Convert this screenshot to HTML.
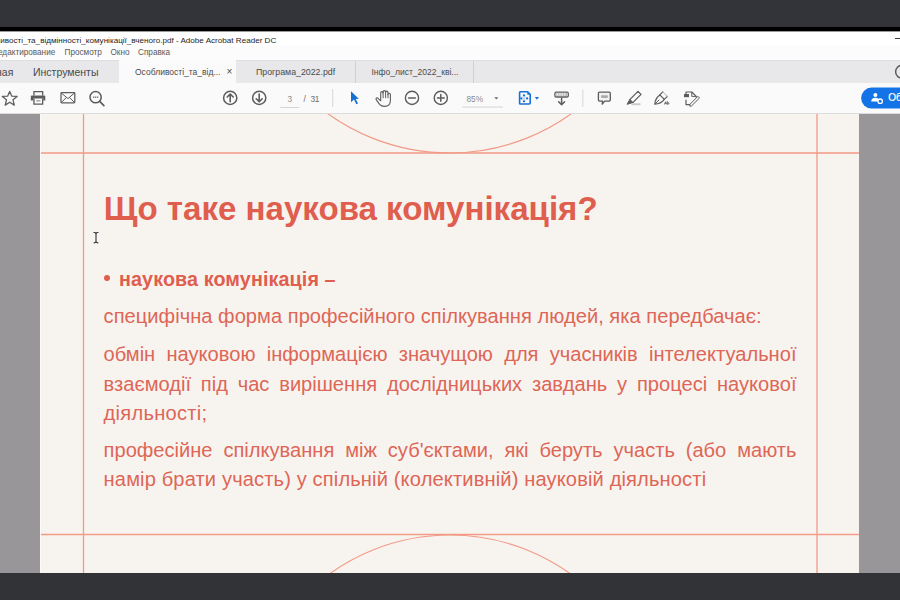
<!DOCTYPE html>
<html><head><meta charset="utf-8">
<style>
*{margin:0;padding:0;box-sizing:border-box}
html,body{width:900px;height:600px;overflow:hidden;background:#323338;font-family:"Liberation Sans",sans-serif}
.abs{position:absolute}
#topdark{left:0;top:0;width:900px;height:27px;background:#333439}
#blk{left:0;top:27px;width:900px;height:4px;background:#000}
#title{left:0;top:31px;width:900px;height:29px;background:#fff}
#tabs{left:0;top:60px;width:900px;height:23px;background:#e8e8ea;border-top:1px solid #dedee0}
#tb{left:0;top:83px;width:900px;height:31px;background:#fafafb;border-bottom:1px solid #dcdcdc}
#view{left:0;top:114px;width:900px;height:459px;background:#989698;overflow:hidden}
#page{left:40px;top:0;width:819px;height:459px;background:#f7f4f0;overflow:hidden;border-left:1px solid #fbfaf7}
#bot{left:0;top:573px;width:900px;height:27px;background:#323337}
.u{position:absolute;white-space:nowrap;line-height:1}
.t{position:absolute;white-space:nowrap;color:#de6656;line-height:1;font-size:20.1px}
.j{text-align:justify;text-align-last:justify;width:692.9px}
</style></head><body>
<div id="topdark" class="abs"></div>
<div id="blk" class="abs"></div>
<div id="title" class="abs"></div>
<div class="abs" style="left:0;top:46px;width:900px;height:14px;background:#fcfcfc"></div>
<div class="abs" style="left:0;top:31px;width:900px;height:1px;background:#9a9a9a"></div>
<div class="u" style="left:-4.5px;top:36.6px;font-size:8.1px;color:#262626">ливості_та_відмінності_комунікації_вченого.pdf - Adobe Acrobat Reader DC</div>
<div class="u" style="left:-2px;top:49px;font-size:8.2px;color:#5a5a5a">едактирование</div>
<div class="u" style="left:64.5px;top:49px;font-size:8.2px;color:#5a5a5a">Просмотр</div>
<div class="u" style="left:110.5px;top:49px;font-size:8.2px;color:#5a5a5a">Окно</div>
<div class="u" style="left:138px;top:49px;font-size:8.2px;color:#5a5a5a">Справка</div>
<div id="tabs" class="abs"></div>
<div class="abs" style="left:118.5px;top:60px;width:117.5px;height:24px;background:#fafafa"></div>
<div class="abs" style="left:355px;top:61px;width:1px;height:22px;background:#d0d0d2"></div>
<div class="abs" style="left:473px;top:61px;width:1px;height:22px;background:#d0d0d2"></div>
<div class="u" style="left:-4px;top:67px;font-size:10.5px;color:#4a4a4a">ная</div>
<div class="abs" style="left:894.7px;top:38.2px;width:6px;height:1.1px;background:#3a3a3a"></div>
<div class="u" style="left:33px;top:67px;font-size:10.5px;color:#4a4a4a">Инструменты</div>
<div class="u" style="left:135px;top:68px;font-size:8.5px;color:#4a4a4a">Особливості_та_від...</div>
<div class="u" style="left:226.5px;top:67px;font-size:10px;color:#4a4a4a">×</div>
<div class="u" style="left:256px;top:68px;font-size:8.8px;color:#4a4a4a">Програма_2022.pdf</div>
<div class="u" style="left:371.5px;top:68px;font-size:8.5px;color:#4a4a4a">Інфо_лист_2022_кві...</div>
<div id="tb" class="abs"></div>
<svg class="abs" style="left:0;top:0" width="900" height="114">
 <g fill="none" stroke="#5c5c5c" stroke-width="1.25" stroke-linejoin="round" stroke-linecap="round">
  <!-- star -->
  <path d="M9.7 91.4 L11.7 96.1 L17.1 96.4 L13 99.8 L14.3 105.1 L9.7 102.2 L5.2 105.1 L6.5 99.8 L2.3 96.4 L7.7 96.1 Z"/>
  <!-- envelope -->
  <rect x="61" y="92.5" width="13.8" height="10.3" rx="0.8"/>
  <path d="M61.3 93 L67.9 98.6 L74.5 93 M61.3 102.5 L66.3 97.6 M74.5 102.5 L69.5 97.6" stroke-width="1"/>
  <!-- magnifier -->
  <circle cx="95.6" cy="97.2" r="5.6" stroke-width="1.5"/>
  <path d="M99.7 101.3 L103.9 105.6" stroke-width="1.7"/>
  <!-- up/down -->
  <circle cx="230.2" cy="97.9" r="6.6" stroke-width="1.5"/>
  <path d="M230.2 101.8 V94.3 M227.2 97 L230.2 94 L233.2 97" stroke-width="1.6"/>
  <circle cx="259.2" cy="97.9" r="6.6" stroke-width="1.5"/>
  <path d="M259.2 94 V101.5 M256.2 98.8 L259.2 101.8 L262.2 98.8" stroke-width="1.6"/>
  <!-- minus/plus -->
  <circle cx="412" cy="97.9" r="6.6" stroke-width="1.4"/>
  <path d="M408.6 97.9 H415.4" stroke-width="1.5"/>
  <circle cx="440.8" cy="97.9" r="6.6" stroke-width="1.4"/>
  <path d="M437.4 97.9 H444.2 M440.8 94.5 V101.3" stroke-width="1.5"/>
  <!-- hand -->
  <path d="M380.7 100.8 L378 98.3 Q376.6 97.3 376.1 98.4 Q375.8 99.2 376.5 100.2 L379.6 104.4 Q381.5 106.4 384.5 106.4 Q390.4 106.4 390.4 100.6 V94.6 Q390.4 93.2 389.2 93.2 Q388 93.2 388 94.6 V92.5 Q388 91.1 386.8 91.1 Q385.6 91.1 385.6 92.5 V92 Q385.6 90.6 384.3 90.6 Q383.1 90.6 383.1 92 V92.9 Q383.1 91.6 381.9 91.6 Q380.7 91.6 380.7 92.9 Z" stroke-width="1.1"/>
  <path d="M383.1 92.6 V97.8 M385.6 92.3 V97.8 M388 94.2 V97.8" stroke-width="1"/>
  <!-- comment -->
  <path d="M599.5 92.2 H609.2 Q610.3 92.2 610.3 93.3 V100 Q610.3 101.1 609.2 101.1 H604.8 L602.2 104.2 L602.6 101.1 H599.5 Q598.4 101.1 598.4 100 V93.3 Q598.4 92.2 599.5 92.2 Z" fill="#f2f2f2" stroke-width="1.3"/>
  <rect x="601.2" y="95.3" width="6.6" height="2.6" fill="#a8a8a8" stroke="none"/>
  <!-- highlighter -->
  <path d="M638 91.4 L641 94.4 L632.8 102.6 L629.8 99.6 Z" stroke-width="1.25"/>
  <path d="M629.8 99.6 L627 104.3 L632.8 102.6" fill="#5c5c5c" stroke-width="1"/>
  <path d="M631.5 104.3 H640.5" stroke="#c9c9c9" stroke-width="1.9" stroke-linecap="butt"/>
  <!-- fill & sign -->
  <path d="M654.8 104.2 Q655 98.6 659.8 94.9 L664.3 99.4 Q660.8 103.9 654.8 104.2 Z" stroke-width="1.3"/>
  <path d="M659.8 94.9 L662.8 91.9 M664.3 99.4 L667.4 96.4" stroke-width="1.15"/>
  <path d="M662.8 91.9 L667.4 96.4" stroke="#b5b5b5" stroke-width="1"/>
  <path d="M655.2 103.8 L659 100" stroke-width="1"/>
  <path d="M664.6 104.2 L665.6 101.8 L666.6 104.2 M665 103.3 H666.2 M667.3 101.4 V104.2 Q669.3 104.4 669.1 103.2 Q668.9 102.3 667.3 102.9" stroke-width="0.8"/>
  <!-- organize -->
  <path d="M686 93.6 V92 H691.8 L696.2 96.4 V97.2 M686 100 V104.6 H689.6" stroke-width="1.2"/>
  <path d="M691.8 92.2 V96.4 H696" stroke-width="1"/>
  <path d="M698.2 96.6 L699.6 98 L691.4 106 L689.8 106.2 L690 104.6 Z" stroke-width="1"/>
  <!-- scroll -->
  <path d="M561.6 98.2 V104.5 M558.6 101.7 L561.6 104.7 L564.6 101.7" stroke-width="1.5"/>
  <!-- tab circle -->
  <circle cx="902" cy="71.7" r="6.4" stroke-width="1.5"/>
 </g>
 <!-- printer -->
 <g fill="#5c5c5c">
  <path d="M33.3 91 H43.3 V95.5 H42 V92.3 H34.6 V95.5 H33.3 Z"/>
  <path d="M31.8 95.5 H44.3 Q45.3 95.5 45.3 96.5 V100.6 H43.3 V98.5 H33.3 V100.6 H30.8 V96.5 Q30.8 95.5 31.8 95.5 Z"/>
  <path d="M33.3 98.5 H34.6 V103.4 H42 V98.5 H43.3 V104.7 H33.3 Z"/>
  <rect x="36.2" y="100.3" width="4.2" height="1.1" fill="#888"/>
  <!-- magnifier dots -->
  <rect x="92.9" y="96.5" width="1.4" height="1.4" fill="#777"/>
  <rect x="94.9" y="96.5" width="1.4" height="1.4" fill="#777"/>
  <rect x="96.9" y="96.5" width="1.4" height="1.4" fill="#777"/>
  <!-- scroll rect -->
  <rect x="554.9" y="92.1" width="13.4" height="4.9" rx="1.3" fill="none" stroke="#5c5c5c" stroke-width="1.3"/>
  <rect x="556.2" y="93.4" width="10.8" height="2.3" fill="#a9a9a9"/>
  <rect x="556.8" y="93.8" width="1.5" height="1.5" fill="#f4f4f4"/><rect x="559.2" y="93.8" width="1.5" height="1.5" fill="#f4f4f4"/><rect x="561.6" y="93.8" width="1.5" height="1.5" fill="#f4f4f4"/><rect x="564" y="93.8" width="1.5" height="1.5" fill="#f4f4f4"/>
  <!-- organize filled block -->
  <rect x="684" y="94" width="5" height="3.2"/>
 </g>
 <!-- blue cursor -->
 <path d="M351 91.2 L351 102.2 L354 99.6 L356.3 104.3 L358 103.5 L355.7 98.9 L358.8 98.7 Z" fill="#1670d6"/>
 <!-- blue page -->
 <path d="M520.3 91.8 H527.6 L530.2 94.4 V103 Q530.2 104 529.2 104 H520.3 Q519.6 104 519.6 103.2 V92.6 Q519.6 91.8 520.3 91.8 Z" fill="none" stroke="#1670d6" stroke-width="1.6"/>
 <path d="M527.3 92.3 L529.8 94.8 H527.3 Z" fill="#1670d6"/>
 <g fill="#1670d6">
  <circle cx="524" cy="95.4" r="1.15"/><circle cx="521.3" cy="98.4" r="1.15"/><circle cx="527.1" cy="98.4" r="1.15"/><circle cx="524" cy="101.3" r="1.15"/>
  <path d="M534.8 97 H539 L536.9 99.7 Z"/>
 </g>
 <path d="M522.2 96.6 L525.8 100.2 M525.8 96.6 L522.2 100.2" stroke="#8fb8e8" stroke-width="0.7"/>
 <!-- separators -->
 <rect x="332.2" y="89" width="1" height="18" fill="#d8d8d8"/>
 <rect x="582.3" y="89.5" width="1" height="17.5" fill="#d8d8d8"/>
 <!-- page number underline & zoom underline -->
 <rect x="280.3" y="107" width="19" height="1" fill="#d6d6d6"/>
 <rect x="462.3" y="106.6" width="40.7" height="0.9" fill="#d0d0d0"/>
 <path d="M494.3 97.2 H498.3 L496.3 99.6 Z" fill="#666"/>
 <!-- blue button -->
 <rect x="861.1" y="87.6" width="60" height="21" rx="10.5" fill="#1473e6"/>
 <g fill="#fff">
  <circle cx="875.4" cy="94.9" r="2"/>
  <path d="M871.2 101.6 Q871.2 97.8 875.4 97.8 Q877.8 97.8 878.6 99 L877.8 101.6 Z"/>
 </g>
 <circle cx="880.2" cy="101.2" r="2.2" fill="#1473e6" stroke="#fff" stroke-width="1.3"/>
</svg>
<div class="u" style="left:287.5px;top:95px;font-size:8.3px;color:#8a8a8a">3</div>
<div class="u" style="left:303.5px;top:95px;font-size:8.3px;color:#6a6a6a">/&nbsp;&nbsp;<span style="letter-spacing:-0.4px">31</span></div>
<div class="u" style="left:466.5px;top:94.7px;font-size:8.3px;color:#8a8a8a">85%</div>
<div class="u" style="left:888.2px;top:93.2px;font-size:10px;color:#fff;-webkit-text-stroke:0.2px #fff">Об</div>
<div id="view" class="abs">
 <div id="page" class="abs">
  <svg width="819" height="460" style="position:absolute;left:-1px;top:0">
   <g stroke="#f29a86" fill="none" transform="translate(0,0)">
    <line x1="43.5" y1="-2" x2="43.5" y2="460" stroke-width="1.3"/>
    <line x1="777" y1="-2" x2="777" y2="460" stroke-width="1.3"/>
    <line x1="0" y1="39" x2="819" y2="39" stroke-width="1.5"/>
    <line x1="0" y1="420.5" x2="819" y2="420.5" stroke-width="1.3"/>
    <circle cx="409.6" cy="-169" r="208" stroke-width="1.2"/>
    <circle cx="410" cy="627" r="206" stroke-width="1.2"/>
   </g>
  </svg>
 </div>
</div>
<div class="t" style="left:103.7px;top:191.9px;font-size:33.1px;font-weight:bold;color:#df5e4e">Що таке наукова комунікація?</div>
<div class="abs" style="left:104.1px;top:274.8px;width:6.2px;height:6.2px;border-radius:50%;background:#df5e4e"></div>
<div class="t" style="left:119px;top:269.6px;letter-spacing:0.1px;font-size:19.75px;font-weight:bold;color:#df5e4e">наукова комунікація –</div>
<div class="t" style="left:103.6px;top:306.4px;letter-spacing:0.03px">специфічна форма професійного спілкування людей, яка передбачає:</div>
<div class="t j" style="left:103.6px;top:343.7px">обмін науковою інформацією значущою для учасників інтелектуальної</div>
<div class="t j" style="left:103.6px;top:373.6px">взаємодії під час вирішення дослідницьких завдань у процесі наукової</div>
<div class="t" style="left:103.6px;top:403px;letter-spacing:0.27px">діяльності;</div>
<div class="t j" style="left:103.6px;top:440.2px">професійне спілкування між суб'єктами, які беруть участь (або мають</div>
<div class="t" style="left:103.6px;top:469px;letter-spacing:0.135px">намір брати участь) у спільній (колективній) науковій діяльності</div>
<svg class="abs" style="left:86px;top:225px" width="20" height="25">
 <path d="M8 7.4 Q9.8 7.4 10 9 Q10.2 7.4 12 7.4 M10 9 V16.5 M8 17.8 Q9.8 17.8 10 16.3 Q10.2 17.8 12 17.8" fill="none" stroke="#fff" stroke-width="2.6" stroke-linecap="round" opacity="0.8"/>
 <path d="M8 7.4 Q9.8 7.4 10 9 Q10.2 7.4 12 7.4 M10 9 V16.5 M8 17.8 Q9.8 17.8 10 16.3 Q10.2 17.8 12 17.8" fill="none" stroke="#3a3a3a" stroke-width="1.2" stroke-linecap="round"/>
</svg>
<div id="bot" class="abs"></div>
</body></html>
